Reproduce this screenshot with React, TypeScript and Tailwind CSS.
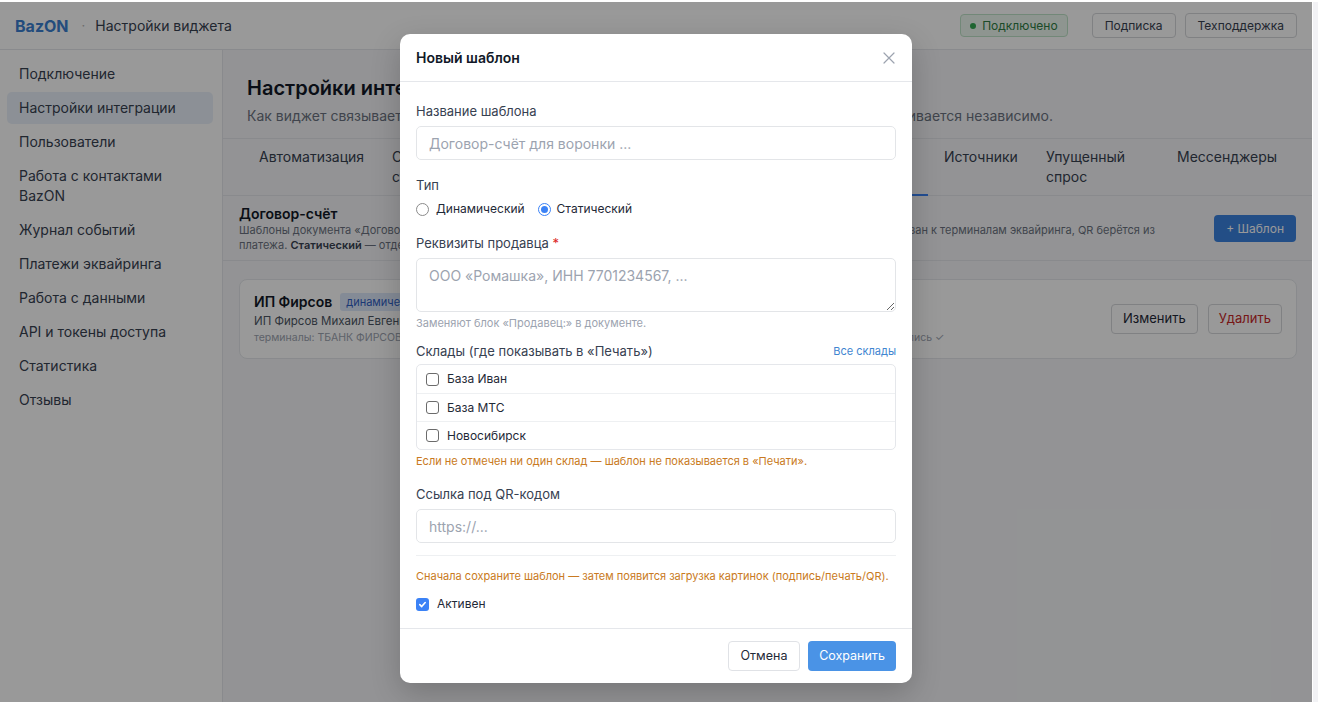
import React from "react";

const sidebarItems = [
  "Подключение",
  "Настройки интеграции",
  "Пользователи",
  "Работа с контактами BazON",
  "Журнал событий",
  "Платежи эквайринга",
  "Работа с данными",
  "API и токены доступа",
  "Статистика",
  "Отзывы",
];

const tabs: { label: string; w: string; active?: boolean }[] = [
  { label: "Автоматизация", w: "w-[133px]" },
  { label: "Сделки и статусы", w: "w-[137px]" },
  { label: "Товары и склады", w: "w-[137px]" },
  { label: "Печать", w: "w-[137px]" },
  { label: "Договор-счёт", w: "w-[141px]", active: true },
  { label: "Источники", w: "w-[102px]" },
  { label: "Упущенный спрос", w: "w-[131px]" },
  { label: "Мессенджеры", w: "w-[147px]" },
];

const warehouses = ["База Иван", "База МТС", "Новосибирск"];

function Radio({ checked }: { checked: boolean }) {
  if (checked) {
    return (
      <span className="flex h-[13px] w-[13px] items-center justify-center rounded-full border border-[#3b82f6] bg-white">
        <span className="h-[7px] w-[7px] rounded-full bg-[#3b82f6]" />
      </span>
    );
  }
  return <span className="h-[13px] w-[13px] rounded-full border border-[#8b8b8b] bg-white" />;
}

function Box({ checked }: { checked: boolean }) {
  if (checked) {
    return (
      <span className="flex h-[13px] w-[13px] items-center justify-center rounded-[3px] bg-[#3b82f6]">
        <svg width="9" height="9" viewBox="0 0 10 10" fill="none">
          <path d="M2 5.2 4.1 7.3 8 2.8" stroke="white" strokeWidth="1.8" strokeLinecap="round" strokeLinejoin="round" />
        </svg>
      </span>
    );
  }
  return <span className="h-[13px] w-[13px] rounded-[3px] border border-[#6b6b6b] bg-white" />;
}

function Header() {
  return (
    <div className="flex h-[48px] shrink-0 items-center justify-between border-b border-[#e5e7eb] bg-white px-[15px]">
      <div className="flex items-center">
        <span className="text-[16px] font-bold text-[#3b7fd0]">BazON</span>
        <span className="ml-[13px] text-[13px] text-[#b5b5b5]">·</span>
        <span className="ml-[10px] text-[14px] text-[#374151]">Настройки виджета</span>
      </div>
      <div className="flex items-center">
        <div className="flex h-[23px] items-center gap-[6px] rounded-[4px] border border-[#bfe3c8] bg-[#edf9f0] px-[9px] text-[12px] text-[#2f7d44]">
          <span className="h-[6px] w-[6px] rounded-full bg-[#34a853]" />
          Подключено
        </div>
        <button className="ml-[24px] h-[25px] rounded-[4px] border border-[#d5d7db] bg-white px-[12px] text-[12px] text-[#374151]">
          Подписка
        </button>
        <button className="ml-[9px] h-[25px] rounded-[4px] border border-[#d5d7db] bg-white px-[12px] text-[12px] text-[#374151]">
          Техподдержка
        </button>
      </div>
    </div>
  );
}

function Sidebar() {
  return (
    <div className="flex w-[223px] shrink-0 flex-col gap-[2px] border-r border-[#e5e7eb] bg-white pl-[7px] pr-[9px] pt-[8px]">
      {sidebarItems.map((item, i) => (
        <div
          key={item}
          className={`rounded-[5px] px-[12px] py-[6px] text-[14px] leading-[20px] text-[#374151] ${
            i === 1 ? "bg-[#eaf1fa]" : ""
          }`}
        >
          {item}
        </div>
      ))}
    </div>
  );
}

function Main() {
  return (
    <div className="flex min-w-0 flex-1 flex-col">
      <div className="border-b border-[#e5e7eb] px-6 pb-3 pt-6">
        <div className="whitespace-nowrap text-[20px] font-semibold leading-7 text-[#111827]">Настройки интеграции</div>
        <div className="mt-1 whitespace-nowrap text-[14px] leading-5 text-[#6b7280]">
          Как виджет связывается с amoCRM и какие данные попадают в сделку. Каждый раздел настраивается независимо.
        </div>
      </div>
      <div className="flex border-b border-[#e5e7eb] px-6">
        {tabs.map((t) => (
          <div key={t.label} className={`relative shrink-0 px-3 pb-[8px] pt-2 text-[14px] leading-5 text-[#374151] ${t.w}`}>
            {t.label}
            {t.active && <span className="absolute bottom-[-1px] left-0 right-[4px] h-[2px] bg-[#3b82f6]" />}
          </div>
        ))}
      </div>
      <div className="flex items-start justify-between gap-6 border-b border-[#e5e7eb] px-4 pb-[7px] pt-[9px]">
        <div className="min-w-0">
          <div className="text-[14px] font-semibold leading-[18px] text-[#111827]">Договор-счёт</div>
          <div className="whitespace-nowrap text-[11px] leading-[15px] text-[#6b7280]">
            Шаблоны документа «Договор-счёт» для печати из сделки. Динамический — реквизиты берутся из оплаты, шаблон привязан к терминалам эквайринга, QR берётся из
            <br />
            платежа. <b className="font-semibold text-[#374151]">Статический</b> — отдельный шаблон с фиксированными реквизитами и своей ссылкой под QR-кодом.
          </div>
        </div>
        <button className="mt-[10px] h-[27px] shrink-0 rounded-[4px] bg-[#3b82e0] px-[12px] text-[12px] text-white">
          + Шаблон
        </button>
      </div>
      <div className="ml-4 mr-[15px] mt-[18px] flex items-center justify-between rounded-lg border border-[#e5e7eb] bg-white py-3 pl-[14px] pr-[14px]">
        <div className="min-w-0">
          <div className="flex items-center gap-[8px]">
            <span className="text-[14px] font-semibold leading-5 text-[#111827]">ИП Фирсов</span>
            <span className="rounded-[3px] bg-[#dde8fb] px-[6px] text-[11px] leading-[18px] text-[#2f5fc4]">динамический</span>
          </div>
          <div className="whitespace-nowrap text-[11.5px] leading-[18px] text-[#4b5563]">
            ИП Фирсов Михаил Евгеньевич, ИНН 772345678901, р/с 40802810000000012345
          </div>
          <div className="whitespace-nowrap text-[10.5px] leading-4 text-[#9ca3af]">
            терминалы: ТБАНК ФИРСОВ, ЕКАТЕРИНБУРГ, СБЕР ФИРСОВ · склады: База Ивана, База МТС 2, Новосибирск · печать ✓ · подпись ✓
          </div>
        </div>
        <div className="flex shrink-0 gap-[10px]">
          <button className="h-[30px] rounded-[4px] border border-[#d5d7db] bg-white px-[11px] text-[13px] text-[#1f2937]">
            Изменить
          </button>
          <button className="h-[30px] rounded-[4px] border border-[#d5d7db] bg-white px-[10px] text-[13px] text-[#c62828]">
            Удалить
          </button>
        </div>
      </div>
    </div>
  );
}

function Modal() {
  return (
    <div className="w-[512px] overflow-hidden rounded-[10px] bg-white shadow-[0_10px_30px_rgba(0,0,0,0.2)]">
      <div className="flex h-[48px] items-center justify-between border-b border-[#e5e7eb] px-4">
        <span className="text-[14px] font-semibold text-[#111827]">Новый шаблон</span>
        <svg width="12" height="12" viewBox="0 0 12 12" className="mr-[1px]">
          <path d="M1 1 11 11M11 1 1 11" stroke="#9ca3af" strokeWidth="1.2" strokeLinecap="round" />
        </svg>
      </div>
      <div className="px-4 pb-[15px] pt-5">
        <div className="text-[13px] leading-[18px] text-[#374151]">Название шаблона</div>
        <input
          readOnly
          placeholder="Договор-счёт для воронки ..."
          className="mt-1.5 block h-[34px] w-full rounded-[5px] border border-[#e3e5e8] px-3 text-[14px] outline-none placeholder:text-[#9ca3af]"
        />

        <div className="mt-4 text-[13px] leading-[18px] text-[#374151]">Тип</div>
        <div className="mt-1.5 flex items-center text-[12px] leading-[18px] text-[#1f2937]">
          <Radio checked={false} />
          <span className="ml-[7px]">Динамический</span>
          <span className="ml-[13px]" />
          <Radio checked />
          <span className="ml-[6px]">Статический</span>
        </div>

        <div className="mt-4 text-[13px] leading-[18px] text-[#374151]">
          Реквизиты продавца <span className="text-[#dc2626]">*</span>
        </div>
        <textarea
          readOnly
          placeholder="ООО «Ромашка», ИНН 7701234567, ..."
          className="mt-1.5 block h-[54px] w-full rounded-[5px] border border-[#e3e5e8] px-3 py-[7px] text-[14px] leading-5 outline-none placeholder:text-[#9ca3af]"
        />
        <div className="mt-1 text-[11px] leading-[14px] text-[#9ca3af]">Заменяют блок «Продавец:» в документе.</div>

        <div className="mt-3 flex items-center justify-between">
          <span className="text-[13px] leading-[18px] text-[#374151]">Склады (где показывать в «Печать»)</span>
          <span className="text-[11px] text-[#3f86d1]">Все склады</span>
        </div>
        <div className="mt-1 rounded-[5px] border border-[#e5e7eb]">
          {warehouses.map((w, i) => (
            <div
              key={w}
              className={`flex h-[28px] items-center gap-[8px] px-[9px] text-[12px] text-[#1f2937] ${
                i > 0 ? "border-t border-[#eef0f2]" : ""
              }`}
            >
              <Box checked={false} />
              {w}
            </div>
          ))}
        </div>
        <div className="mt-1 text-[11px] leading-[14px] text-[#c97a22]">
          Если не отмечен ни один склад — шаблон не показывается в «Печати».
        </div>

        <div className="mt-[17px] text-[13px] leading-[18px] text-[#374151]">Ссылка под QR-кодом</div>
        <input
          readOnly
          placeholder="https://..."
          className="mt-1.5 block h-[34px] w-full rounded-[5px] border border-[#e3e5e8] px-3 text-[14px] outline-none placeholder:text-[#9ca3af]"
        />

        <div className="mt-3 border-t border-[#eef0f2]" />
        <div className="mt-[13px] text-[11px] leading-[14px] text-[#c97a22]">
          Сначала сохраните шаблон — затем появится загрузка картинок (подпись/печать/QR).
        </div>
        <div className="mt-[12px] flex items-center gap-[8px] text-[12px] leading-[18px] text-[#1f2937]">
          <Box checked />
          Активен
        </div>
      </div>
      <div className="flex justify-end gap-2 border-t border-[#e5e7eb] px-4 py-3">
        <button className="h-[30px] w-[72px] rounded-[4px] border border-[#e0e2e6] bg-white text-[12.5px] text-[#1f2937]">
          Отмена
        </button>
        <button className="h-[30px] w-[88px] rounded-[4px] bg-[#4a93e6] text-[12.5px] text-white">Сохранить</button>
      </div>
    </div>
  );
}

export default function App() {
  return (
    <div className="flex h-[702px] w-[1318px] flex-col overflow-hidden bg-white font-['Inter','Noto_Sans',sans-serif]">
      <div className="h-[2px] shrink-0 bg-white" />
      <div className="flex min-h-0 flex-1">
        <div className="relative flex w-[1312px] shrink-0 flex-col overflow-hidden bg-[#f5f6f8]">
          <Header />
          <div className="flex min-h-0 flex-1">
            <Sidebar />
            <Main />
          </div>
          <div className="absolute inset-0 flex items-start justify-center bg-black/40 pt-8">
            <Modal />
          </div>
        </div>
        <div className="w-[6px] border-l border-white bg-[#f2f2f5]" />
      </div>
    </div>
  );
}
